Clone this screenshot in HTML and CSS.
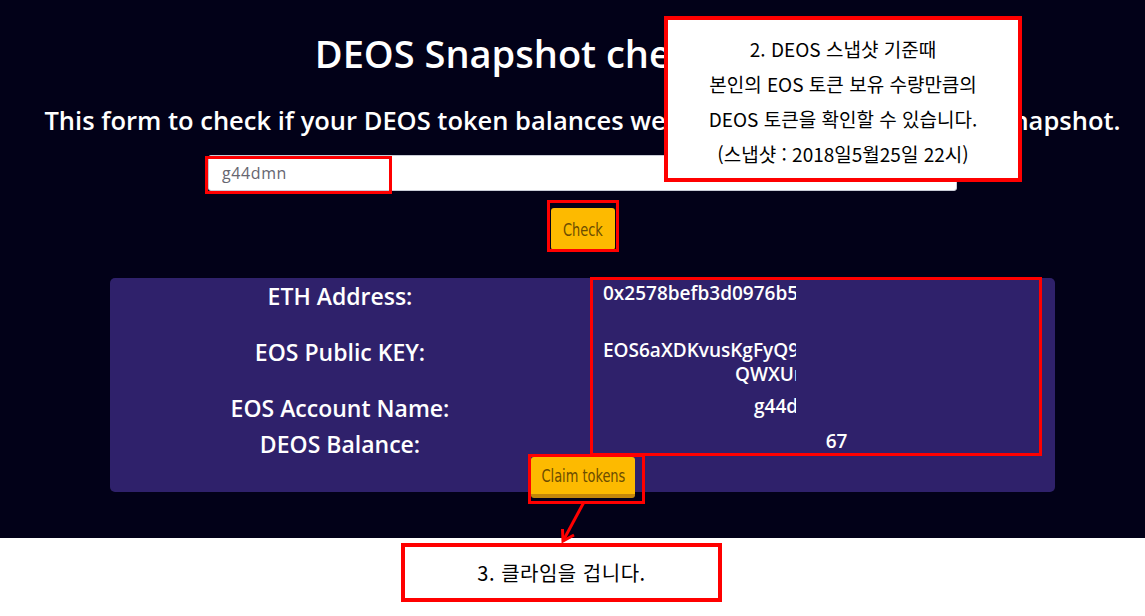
FILE: index.html
```html
<!DOCTYPE html>
<html lang="ko">
<head>
    <meta charset="UTF-8">
    <meta name="viewport" content="width=device-width, initial-scale=1">
    <title>DEOS Snapshot checker</title>
    <link rel="stylesheet" href="styles.css">
</head>
<body>
    <div class="page">
        <h1>DEOS Snapshot checker tools</h1>
        <h2>This form to check if your DEOS token balances were matched within the EOS snapshot.</h2>
        <form class="form" id="checkForm">
            <input type="text" class="account" value="g44dmn">
            <button type="submit" class="btn btn-check"><span>Check</span></button>
        </form>
        <div class="card">
            <div class="row row-eth">
                <div class="label">ETH Address:</div>
                <div class="val"><div class="clip">0x2578befb3d0976b5c41e9a8d</div></div>
            </div>
            <div class="row row-key">
                <div class="label">EOS Public KEY:</div>
                <div class="val">
                    <div class="clip">EOS6aXDKvusKgFyQ9hT3m</div>
                    <div class="clip line2">QWXUr8pLzk</div>
                </div>
            </div>
            <div class="row row-name">
                <div class="label">EOS Account Name:</div>
                <div class="val"><div class="clip name">g44dmn</div></div>
            </div>
            <div class="row row-bal">
                <div class="label">DEOS Balance:</div>
                <div class="val"><div class="balance">67</div></div>
            </div>
            <div class="claim-wrap">
                <button type="button" class="btn btn-claim"><span>Claim tokens</span></button>
            </div>
        </div>
    </div>
    <div class="below">
        <div class="note note-3">3. 클라임을 겁니다.</div>
    </div>

    <!-- annotations -->
    <div class="mark mark-input"></div>
    <div class="mark mark-check"></div>
    <div class="mark mark-values"></div>
    <div class="mark mark-claim"></div>
    <div class="note note-2">
        <p>2. DEOS 스냅샷 기준때</p>
        <p>본인의 EOS 토큰 보유 수량만큼의</p>
        <p>DEOS 토큰을 확인할 수 있습니다.</p>
        <p>(스냅샷 : 2018일5월25일 22시)</p>
    </div>
    <svg class="arrow" width="40" height="50" viewBox="0 0 40 50">
        <line x1="30" y1="2" x2="9" y2="41" stroke="#ff0000" stroke-width="3"/>
        <polyline points="8.5,29 9,41 20,35" fill="none" stroke="#ff0000" stroke-width="3"/>
    </svg>
</body>
</html>
```

FILE: styles.css
```css
body { margin: 0; font-family: "Open Sans", "Noto Sans", sans-serif; background: #fff; position: relative; }
.page { height: 538px; box-sizing: border-box; padding: 31px 0 0 20px; background: #020118; color: #fff; text-align: center; }
h1 { margin: 0; font-size: 38px; line-height: 44px; font-weight: 600; white-space: nowrap; }
h2 { margin: 28px 0 0; font-size: 25.5px; line-height: 34px; font-weight: 600; white-space: nowrap; }
.form { margin-top: 18px; display: flex; flex-direction: column; align-items: center; }
.account { width: 749px; height: 36px; box-sizing: border-box; border: 1px solid #c9ccd6; border-radius: 3px; padding: 0 13px; font-family: "Open Sans", sans-serif; font-size: 16px; letter-spacing: 0.6px; color: #666670; background: #fff; }
.btn { border: none; border-radius: 3px; background: #fdba00; color: #6b4c00; font-family: "DejaVu Sans", sans-serif; font-stretch: condensed; font-size: 18px; padding: 0; white-space: nowrap; }
.btn span { display: inline-block; transform: scaleX(0.8); }
.btn-check { margin-top: 17px; width: 64px; height: 42px; }
.card { margin: 28px auto 0; width: 945px; height: 214px; box-sizing: border-box; padding-top: 3px; background: #2f216b; border-radius: 5px; }
.row { display: grid; grid-template-columns: 460px 485px; }
.row-eth, .row-key { height: 56px; }
.row-name { height: 36px; }
.row-bal { height: 28px; }
.label { font-size: 23px; line-height: 30px; font-weight: 600; }
.val { padding-left: 33px; text-align: left; font-size: 19px; line-height: 24px; font-weight: 600; }
.row-key .val { padding-top: 1px; }
.row-name .val { padding-top: 1px; }
.clip { width: 193px; overflow: hidden; white-space: nowrap; }
.line2 { box-sizing: border-box; padding-left: 132px; }
.name { box-sizing: border-box; padding-left: 151px; }
.balance { width: 467px; text-align: center; }
.claim-wrap { display: flex; justify-content: center; }
.btn-claim { width: 104px; height: 41px; border-bottom: 4px solid #c4870a; }
.below { height: 78px; background: #fff; }

.mark { position: absolute; box-sizing: border-box; border: 3px solid #ff0000; }
.mark-input { left: 205px; top: 156px; width: 187px; height: 38px; }
.mark-check { left: 547px; top: 200px; width: 72px; height: 52px; }
.mark-values { left: 590px; top: 277px; width: 452px; height: 179px; }
.mark-claim { left: 528px; top: 454px; width: 117px; height: 50px; }
.note { position: absolute; box-sizing: border-box; background: #fff; border: 4px solid #ff0000; color: #000; font-family: "Noto Sans CJK KR", "Noto Sans", sans-serif; text-align: center; }
.note-2 { left: 664px; top: 16px; width: 358px; height: 166px; padding-top: 11px; font-size: 19px; }
.note-2 p { margin: 0; line-height: 35px; }
.note-3 { left: 401px; top: 543px; width: 321px; height: 59px; font-size: 20px; letter-spacing: 0.5px; line-height: 51px; }
.arrow { position: absolute; left: 554px; top: 500px; }
```
